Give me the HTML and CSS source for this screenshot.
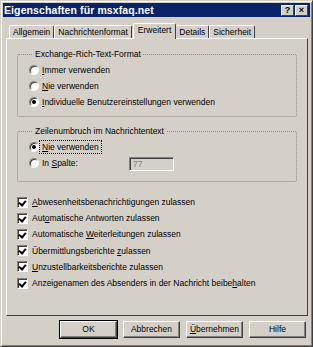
FILE: index.html
```html
<!DOCTYPE html>
<html lang="de">
<head>
    <meta charset="UTF-8">
    <title>Eigenschaften für msxfaq.net</title>
    <link rel="stylesheet" href="styles.css">
</head>
<body>
    <div class="window">
        <!-- Titelleiste -->
        <div class="titlebar">
            <span class="title">Eigenschaften für msxfaq.net</span>
            <span class="title-btn">?</span>
            <span class="title-btn">&#215;</span>
        </div>

        <!-- Registerkarten -->
        <div class="tabs">
            <span class="tab">Allgemein</span>
            <span class="tab">Nachrichtenformat</span>
            <span class="tab active">Erweitert</span>
            <span class="tab">Details</span>
            <span class="tab">Sicherheit</span>
        </div>

        <div class="panel">
            <fieldset class="group group-rtf">
                <legend>Exchange-Rich-Text-Format</legend>
                <div class="row"><span class="radio"></span><span class="label"><u>I</u>mmer verwenden</span></div>
                <div class="row"><span class="radio"></span><span class="label"><u>N</u>ie verwenden</span></div>
                <div class="row"><span class="radio checked"></span><span class="label"><u>I</u>ndividuelle Benutzereinstellungen verwenden</span></div>
            </fieldset>

            <fieldset class="group group-wrap">
                <legend>Zeilenumbruch im Nachrichtentext</legend>
                <div class="row"><span class="radio checked"></span><span class="label focus"><u>N</u>ie verwenden</span></div>
                <div class="row"><span class="radio"></span><span class="label col-label">In <u>S</u>palte:</span><span class="textbox">77</span></div>
            </fieldset>

            <div class="checks">
                <div class="row"><span class="check"></span><span class="label"><u>A</u>bwesenheitsbenachrichtigungen zulassen</span></div>
                <div class="row"><span class="check"></span><span class="label">Aut<u>o</u>matische Antworten zulassen</span></div>
                <div class="row"><span class="check"></span><span class="label">Automatische <u>W</u>eiterleitungen zulassen</span></div>
                <div class="row"><span class="check"></span><span class="label">Übermittlungsberichte <u>z</u>ulassen</span></div>
                <div class="row"><span class="check"></span><span class="label"><u>U</u>nzustellbarkeitsberichte zulassen</span></div>
                <div class="row"><span class="check"></span><span class="label">Anzeigenamen des Absenders in der Nachricht beibe<u>h</u>alten</span></div>
            </div>
        </div>

        <!-- Schaltflächen -->
        <div class="buttons">
            <span class="btn default">OK</span>
            <span class="btn">Abbrechen</span>
            <span class="btn"><u>Ü</u>bernehmen</span>
            <span class="btn">Hilfe</span>
        </div>
    </div>
</body>
</html>
```

FILE: styles.css
```css
/* Grundlayout */
body {
    margin: 0;
    font-family: 'Liberation Sans', Arial, sans-serif;
    font-size: 8.5px;
    color: #000;
    background: #d4d0c8;
}

u {
    text-decoration: underline;
    text-underline-offset: 1px;
}

.window {
    width: 313px;
    height: 347px;
    box-sizing: border-box;
    background: #d4d0c8;
    border: 1px solid;
    border-color: #d4d0c8 #404040 #404040 #d4d0c8;
    box-shadow: inset 1px 1px 0 #fff, inset -1px -1px 0 #808080;
    display: flex;
    flex-direction: column;
}

/* Titelleiste */
.titlebar {
    margin: 2px 2px 0 2px;
    height: 14px;
    background: #0a246a;
    display: flex;
    align-items: center;
    padding: 0 2px 0 1px;
}
.title {
    flex: 1;
    color: #fff;
    font-weight: bold;
    font-size: 10.5px;
    letter-spacing: 0.1px;
}
.title-btn {
    width: 13px;
    height: 11px;
    box-sizing: border-box;
    background: #d4d0c8;
    border: 1px solid;
    border-color: #fff #404040 #404040 #fff;
    font-weight: bold;
    font-size: 9px;
    line-height: 9px;
    text-align: center;
}
.title-btn + .title-btn {
    margin-left: 1px;
}

/* Registerkarten */
.tabs {
    display: flex;
    align-items: flex-end;
    margin: 5px 0 0 8px;
    height: 16px;
}
.tab {
    height: 12px;
    line-height: 12px;
    padding: 0 3px;
    border: 1px solid;
    border-bottom: none;
    border-color: #fff #404040 transparent #fff;
    border-radius: 2px 2px 0 0;
    white-space: nowrap;
}
.tab.active {
    height: 15px;
    line-height: 13px;
    padding: 0 4px;
    margin: 0 -1px -1px 1px;
    position: relative;
    z-index: 1;
    background: #d4d0c8;
}

/* Registerinhalt */
.panel {
    margin: 0 4px 0 5px;
    height: 278px;
    box-sizing: border-box;
    border: 1px solid;
    border-color: #fff #404040 #404040 #fff;
    padding: 0 10px 0 10px;
}

.group {
    margin: 10px 0 0 0;
    padding: 3px 0 6px 11px;
    border: 1px dotted #8a8a8a;
    border-radius: 2px;
    min-width: 0;
}
.group legend {
    padding: 0 2px;
    margin-left: 4px;
    line-height: 10px;
}
.group-wrap {
    margin-top: 9px;
    padding-bottom: 10px;
}

.row {
    height: 16px;
    display: flex;
    align-items: center;
    white-space: nowrap;
}

/* Optionsfelder */
.radio {
    width: 10px;
    height: 10px;
    box-sizing: border-box;
    border-radius: 50%;
    background: #fff;
    border: 1px solid;
    border-color: #808080 #fff #fff #808080;
    box-shadow: inset 1px 1px 0 #404040;
    margin-right: 3px;
    display: flex;
    align-items: center;
    justify-content: center;
}
.radio.checked::after {
    content: "";
    width: 4px;
    height: 4px;
    border-radius: 50%;
    background: #000;
}

.focus {
    outline: 1px dotted #000;
    outline-offset: 1px;
    padding: 0 1px;
    margin-left: -1px;
}
.col-label {
    width: 87px;
}
.textbox {
    width: 45px;
    height: 14px;
    box-sizing: border-box;
    border: 1px solid;
    border-color: #808080 #fff #fff #808080;
    box-shadow: inset 1px 1px 0 #404040;
    color: #808080;
    padding-left: 3px;
    line-height: 12px;
    margin-top: 2px;
}

/* Kontrollkästchen */
.checks {
    margin-top: 12px;
}
.checks .row {
    height: 16.2px;
}
.check {
    width: 11px;
    height: 11px;
    box-sizing: border-box;
    background: #fff;
    border: 1px solid;
    border-color: #808080 #fff #fff #808080;
    box-shadow: inset 1px 1px 0 #404040;
    margin-right: 4px;
    position: relative;
}
.check::after {
    content: "";
    position: absolute;
    left: 2px;
    top: 1px;
    width: 3px;
    height: 5px;
    border: solid #000;
    border-width: 0 2px 2px 0;
    transform: rotate(40deg);
}

/* Schaltflächen */
.buttons {
    display: flex;
    justify-content: flex-end;
    gap: 6px;
    margin: 5px 6px 0 0;
}
.btn {
    width: 57px;
    height: 17px;
    box-sizing: border-box;
    border: 1px solid;
    border-color: #fff #404040 #404040 #fff;
    box-shadow: inset -1px -1px 0 #808080;
    text-align: center;
    line-height: 15px;
}
.btn.default {
    outline: 1px solid #000;
    outline-offset: 0;
}
```
